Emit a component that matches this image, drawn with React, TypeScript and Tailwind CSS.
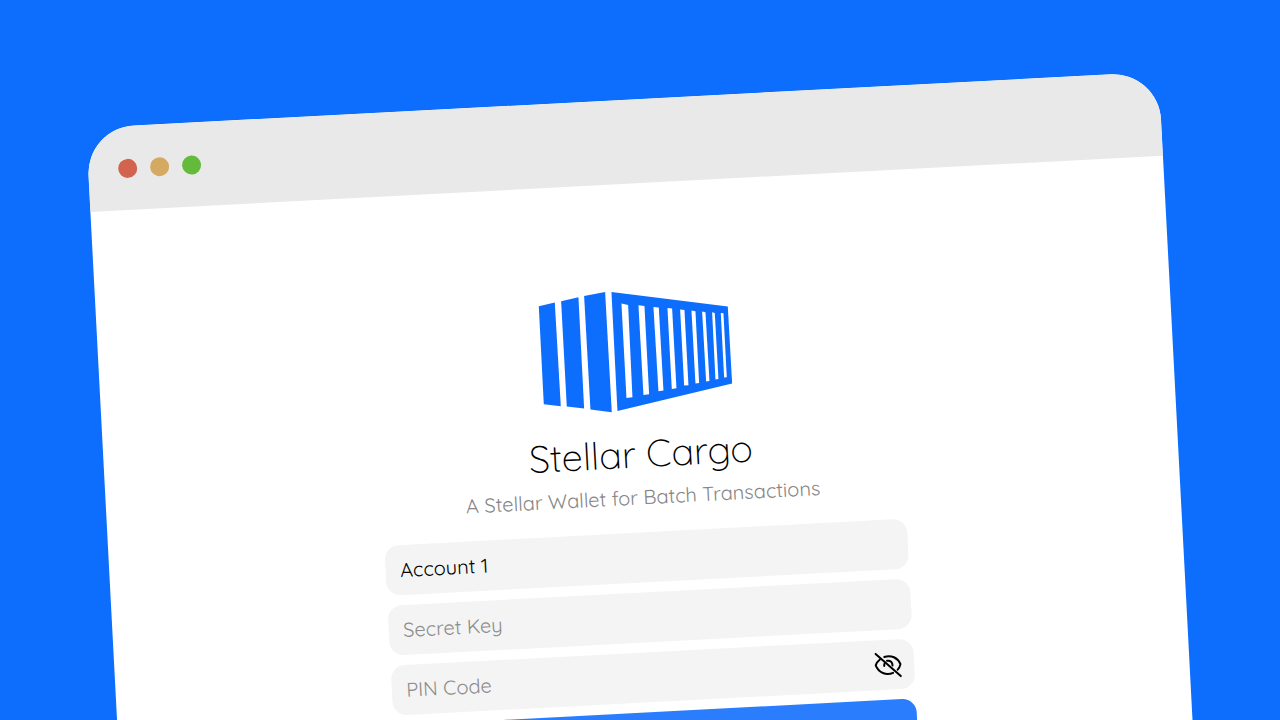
import { useState } from "react";

const containerSlots = [
  "M303 72L323 76L336 353L318 355Z",
  "M354 77L372 79L386 344L369 346Z",
  "M399 82L415 84L429 333L414 335Z",
  "M441 85L455 87L468 326L454 328Z",
  "M479 90L492 91L504 317L491 318Z",
  "M513 93L525 95L536 310L525 312Z",
  "M545 96L555 98L567 304L557 306Z",
  "M575 98L583 100L594 298L585 300Z",
  "M601 100L609 101L619 293L611 294Z",
];

function CargoLogo() {
  return (
    <svg viewBox="45 36 600 360" className="h-[120px] w-[200px] overflow-visible" aria-hidden="true">
      <g transform="rotate(3 345 216)">
        <g className="fill-[#0d6efd]">
          <path d="M55 80L103 69L121 380L70 374Z" />
          <path d="M122 65L174 53L191 387L139 381Z" />
          <path d="M191 49L254 37L274 398L210 390Z" />
          <path d="M273 37L622 81L635 312L291 394Z" />
        </g>
        <g className="fill-white">
          {containerSlots.map((d) => (
            <path key={d} d={d} />
          ))}
        </g>
      </g>
    </svg>
  );
}

function EyeOffIcon() {
  return (
    <svg
      viewBox="0 0 28 28"
      className="size-7"
      fill="none"
      stroke="currentColor"
      strokeWidth="2"
      strokeLinecap="round"
      aria-hidden="true"
    >
      <path d="M2 2.500L26 26" />
      <path d="M10.500 6C17.500 4 24 7.500 26.300 14C25.700 16.200 24.700 18 23.200 19.400" />
      <path d="M6 8.300C3.800 9.800 2.300 11.800 1.500 14C4 21.500 11.500 25 18.500 22.300" />
      <path d="M13 10C16.500 9.500 18.500 11.700 18.300 15" />
      <path d="M10.500 12.500C10 13.300 9.900 14 10 15" />
    </svg>
  );
}

const fieldClass =
  "h-[50px] w-full rounded-[14px] bg-[#f4f4f4] px-[15px] pb-[2px] text-xl text-black outline-none placeholder:text-[#8c8c8c]";

export default function App() {
  const [account, setAccount] = useState("Account 1");
  const [pinVisible, setPinVisible] = useState(false);

  return (
    <div className="h-screen overflow-hidden bg-[#0d6efd] pt-32 pr-[120px] pl-[86px] font-['Quicksand','Lato',sans-serif]">
      <div className="min-h-screen origin-top-left -rotate-3 overflow-hidden rounded-t-[48px] bg-white">
        <header className="flex h-[84px] items-center gap-[13px] bg-[#e9e9e9] px-[30px]">
          <span className="size-[19px] rounded-full bg-[#d1634f]" />
          <span className="size-[19px] rounded-full bg-[#d5a962]" />
          <span className="size-[19px] rounded-full bg-[#64ba3a]" />
        </header>
        <main className="flex flex-col items-center pt-[108px]">
          <CargoLogo />
          <h1 className="mt-[22px] text-[38px] leading-10 font-light text-black">Stellar Cargo</h1>
          <p className="mt-[10px] text-xl leading-7 text-[#868686]">A Stellar Wallet for Batch Transactions</p>
          <form className="mt-[21px] flex w-full max-w-[523px] flex-col gap-[10px]">
            <input
              aria-label="Account name"
              className={fieldClass}
              value={account}
              onChange={(e) => setAccount(e.target.value)}
            />
            <input aria-label="Secret key" className={fieldClass} placeholder="Secret Key" />
            <div className="relative">
              <input
                aria-label="PIN code"
                type={pinVisible ? "text" : "password"}
                className={fieldClass}
                placeholder="PIN Code"
              />
              <button
                type="button"
                aria-label="Toggle PIN visibility"
                className="absolute inset-y-0 right-3 flex items-center text-black"
                onClick={() => setPinVisible(!pinVisible)}
              >
                <EyeOffIcon />
              </button>
            </div>
            <button type="submit" aria-label="Continue" className="h-[50px] rounded-[14px] bg-[#2a7dfd]" />
          </form>
        </main>
      </div>
    </div>
  );
}
